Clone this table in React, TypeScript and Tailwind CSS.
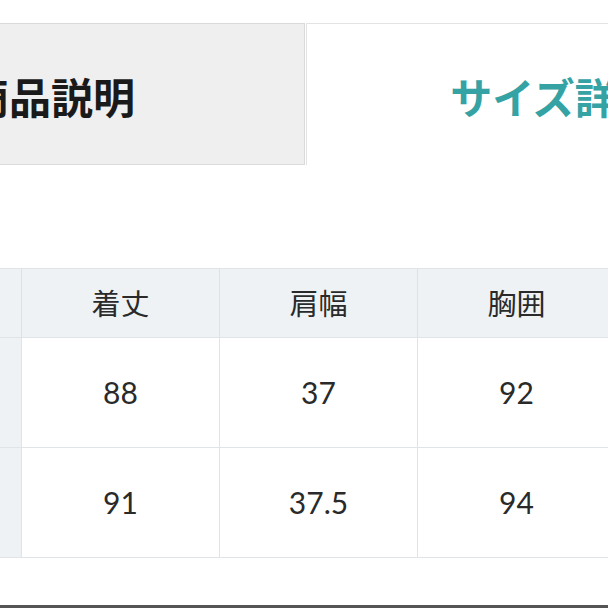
import React from "react";

const jp = { fontFamily: '"Noto Sans CJK JP", "Noto Sans", sans-serif' };
const num = { fontFamily: 'Lato, "Liberation Sans", sans-serif' };

const headers = ["", "着丈", "肩幅", "胸囲", "袖丈"];
const rows = [
  ["S", "88", "37", "92", "60"],
  ["M", "91", "37.5", "94", "61"],
];

export default function App() {
  return (
    <div className="w-[608px] h-[608px] overflow-hidden bg-white flex flex-col">
      <div className="mt-[23px] h-[142px] flex shrink-0" style={jp}>
        <div className="w-[508px] shrink-0 ml-[-203px] bg-[#efefef] border border-[#dadada] flex items-center justify-center pt-[3px]">
          <span className="text-[42px] font-bold text-[#1a1a1a] leading-none">商品説明</span>
        </div>
        <div className="w-[508px] shrink-0 ml-px bg-white border-t border-l border-[#e3e3e3] flex items-center justify-center pr-[12px] pt-[3px]">
          <span className="text-[42px] font-bold text-[#35a2a4] leading-none">サイズ詳細</span>
        </div>
      </div>

      <div className="mt-[103px] ml-[-177px] border-t border-[#e1e4e6] flex flex-col shrink-0">
        <div className="flex h-[69px] border-b border-[#e1e4e6] bg-[#eef2f4]">
          {headers.map((h, i) => (
            <div
              key={i}
              className="w-[198px] shrink-0 border-l border-[#dde1e4] flex items-center justify-center text-[29px] text-[#2a2a2a]"
              style={jp}
            >
              {i === 0 ? "" : h}
            </div>
          ))}
        </div>
        {rows.map((r, ri) => (
          <div key={ri} className="flex h-[110px] border-b border-[#e1e4e6]">
            {r.map((c, ci) => (
              <div
                key={ci}
                className={
                  "w-[198px] shrink-0 border-l border-[#e1e4e6] flex items-center justify-center text-[30px] text-[#2a2a2a] " +
                  (ci === 0 ? "bg-[#eef2f4]" : "bg-white")
                }
                style={num}
              >
                {ci === 0 ? "" : c}
              </div>
            ))}
          </div>
        ))}
      </div>

      <div className="mt-auto h-[3px] bg-[#555] shrink-0" />
    </div>
  );
}
